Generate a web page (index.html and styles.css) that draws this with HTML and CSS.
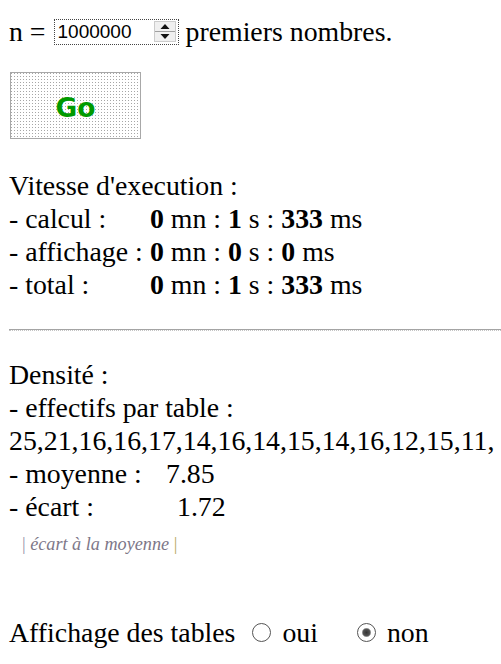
FILE: index.html
```html
<!DOCTYPE html>
<html lang="fr">
<head>
<meta charset="utf-8">
<title>Premiers nombres</title>
<link rel="stylesheet" href="styles.css">
</head>
<body>
<div class="page">
  <p class="row-n">n =
    <span class="num-field"><input class="num-input" type="text" value="1000000"><svg class="spin" width="22" height="21" viewBox="0 0 22 21"><rect x="0.5" y="0.5" width="21" height="20" fill="#f0f0f0" stroke="#a0a0a0" stroke-dasharray="1 1"/><line x1="1" y1="10.5" x2="21" y2="10.5" stroke="#a0a0a0"/><path d="M11 3 L15.5 8 L6.5 8 Z" fill="#111"/><path d="M6.5 13 L15.5 13 L11 18 Z" fill="#111"/></svg></span>
    premiers nombres.</p>

  <button class="go" type="button">Go</button>

  <div class="block speed">
    <div>Vitesse d'execution :</div>
    <div><span class="lbl lbl-time">- calcul :</span><b>0</b> mn : <b>1</b> s : <b>333</b> ms</div>
    <div><span class="lbl lbl-time">- affichage :</span><b>0</b> mn : <b>0</b> s : <b>0</b> ms</div>
    <div><span class="lbl lbl-time">- total :</span><b>0</b> mn : <b>1</b> s : <b>333</b> ms</div>
  </div>

  <hr class="sep">

  <div class="block density">
    <div>Densité :</div>
    <div>- effectifs par table :</div>
    <div class="counts">25,21,16,16,17,14,16,14,15,14,16,12,15,11,</div>
    <div><span class="lbl lbl-moy">- moyenne :</span>7.85</div>
    <div><span class="lbl lbl-ecart">- écart :</span>1.72</div>
  </div>

  <p class="note"><span class="bar bar-l">|</span> écart à la moyenne <span class="bar bar-r">|</span></p>

  <p class="tables">Affichage des tables
    <label class="opt"><input type="radio" name="aff" class="radio">oui</label>
    <label class="opt opt-non"><input type="radio" name="aff" class="radio" checked>non</label>
  </p>
</div>
</body>
</html>
```

FILE: styles.css
```css
html {
  overflow: hidden;
  background: #fff;
}
body {
  margin: 0;
  font-family: "Liberation Serif", "Times New Roman", serif;
  font-size: 27.8px;
  line-height: 33px;
  color: #000;
}
.page {
  padding: 15px 0 0 9px;
}
.row-n {
  margin: 0;
  white-space: nowrap;
  display: flex;
  align-items: center;
  gap: 7px;
  height: 33px;
}
.num-field {
  display: inline-flex;
  align-items: center;
  box-sizing: border-box;
  width: 125px;
  height: 26px;
  border: 1px dotted #444;
  padding: 0 2px 0 3px;
  margin-left: 1px;
}
.num-input {
  border: none;
  outline: none;
  padding: 0;
  margin: 0;
  width: 96px;
  font-family: "Liberation Sans", Arial, sans-serif;
  font-size: 19px;
  color: #000;
  background: transparent;
}
.spin {
  display: block;
  flex: none;
}
.go {
  display: block;
  margin: 24px 0 0 1px;
  width: 131px;
  height: 67px;
  box-sizing: border-box;
  border: 1px solid #a8a8a8;
  background-color: #fff;
  background-image: conic-gradient(from 270deg at 1px 1px, #a6a6a6 90deg, transparent 0);
  background-size: 3px 3px;
  font-family: "DejaVu Sans", Verdana, sans-serif;
  font-weight: bold;
  font-size: 26.5px;
  color: #009a00;
  padding: 3px 0 0 0;
}
.block {
  white-space: nowrap;
}
.speed {
  margin-top: 30px;
}
.lbl {
  display: inline-block;
}
.lbl-time {
  width: 141px;
}
.lbl-moy {
  width: 157px;
}
.lbl-ecart {
  width: 168px;
}
.sep {
  margin: 28px 0 27px 0;
  height: 0;
  border: none;
  border-top: 1px solid #a4a4a4;
  border-bottom: 1px dotted #c4c4c4;
}
.note {
  margin: 11px 0 0 13px;
  font-size: 18.2px;
  line-height: 21px;
  font-style: italic;
  color: #7d7788;
}
.bar {
  font-style: normal;
}
.bar-l {
  color: #9a94a8;
}
.bar-r {
  color: #b8a860;
}
.tables {
  margin: 61px 0 0 0;
  white-space: nowrap;
  display: flex;
  align-items: center;
}
.opt {
  display: inline-flex;
  align-items: center;
  margin-left: 17px;
}
.opt-non {
  margin-left: 39px;
}
.radio {
  appearance: none;
  -webkit-appearance: none;
  width: 19px;
  height: 19px;
  margin: 0 11px 0 0;
  border: 1px solid #555;
  border-radius: 50%;
  background: #fff;
  box-sizing: border-box;
}
.radio:checked {
  background: radial-gradient(circle, #333 0, #555 3.5px, #fff 5px);
}
```
